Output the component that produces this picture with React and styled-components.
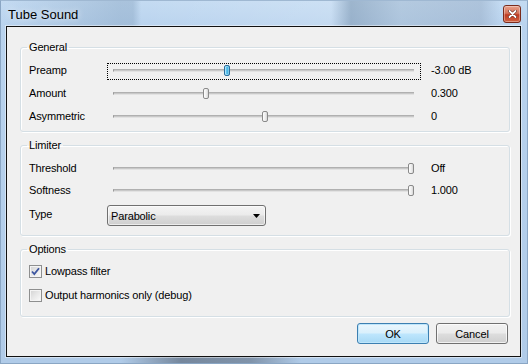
import React from "react";
import styled, { createGlobalStyle, css } from "styled-components";

const GlobalStyle = createGlobalStyle`
  html, body {
    margin: 0;
    padding: 0;
  }
  body {
    width: 528px;
    height: 364px;
    overflow: hidden;
    font-family: "Liberation Sans", Arial, sans-serif;
    font-size: 11px;
    letter-spacing: -0.15px;
    color: #000;
  }
`;

const Window = styled.div`
  width: 528px;
  height: 364px;
  display: flex;
  flex-direction: column;
  box-sizing: border-box;
  border: 1px solid #8aa6c4;
  border-top-color: #9fb8d2;
  background:
    linear-gradient(90deg, rgba(90, 100, 115, 0) 0px, rgba(90, 100, 115, 0) 120px,
      rgba(70, 80, 95, 0.55) 180px, rgba(70, 80, 95, 0.45) 250px, rgba(90, 100, 115, 0) 300px) bottom / 100% 8px no-repeat,
    linear-gradient(180deg, #c4dbf2 0px, #b9d3ee 26px, #b0cbe8 100%);
`;

const TitleBar = styled.div`
  height: 25px;
  display: flex;
  align-items: flex-start;
  justify-content: space-between;
  padding: 0 6px 0 7px;
  background:
    linear-gradient(90deg, rgba(255, 255, 255, 0) 0px, rgba(120, 150, 180, 0.35) 118px,
      rgba(120, 150, 180, 0.35) 132px, rgba(255, 255, 255, 0) 140px, rgba(255, 255, 255, 0.15) 330px,
      rgba(110, 135, 160, 0.45) 350px, rgba(150, 170, 190, 0.35) 400px, rgba(140, 160, 185, 0.4) 480px,
      rgba(255, 255, 255, 0) 500px);
`;

const Title = styled.span`
  font-size: 13px;
  line-height: 16px;
  letter-spacing: 0;
  margin-top: 6px;
  color: #000;
  text-shadow: 0 0 6px rgba(255, 255, 255, 0.9);
`;

const CloseButton = styled.div`
  width: 18px;
  height: 18px;
  margin-top: 4px;
  box-sizing: border-box;
  border: 1px solid #7a2b1c;
  border-radius: 3px;
  display: flex;
  align-items: center;
  justify-content: center;
  background: linear-gradient(180deg, #e8a08a 0%, #d5735a 45%, #bf3b22 55%, #d0603f 100%);
  box-shadow: inset 0 0 0 1px rgba(255, 255, 255, 0.35);
`;

const Frame = styled.div`
  flex: 1;
  display: flex;
  padding: 0 6px 6px 5px;
`;

const Client = styled.div`
  flex: 1;
  display: flex;
  flex-direction: column;
  border: 1px solid #111;
  box-shadow: 0 0 0 1px rgba(255, 255, 255, 0.45);
  background: #f0f0f0;
  padding: 13px 10px 0 13px;
`;

const Group = styled.fieldset`
  margin: ${(p) => (p.$first ? "0" : "6px")} 0 0 0;
  padding: ${(p) => p.$pad};
  border: 1px solid #d5dfe5;
  border-radius: 3px;
  box-shadow: inset 1px 1px 0 #fff, 1px 1px 0 #fff;
  display: flex;
  flex-direction: column;
  min-width: 0;
`;

const Legend = styled.legend`
  margin-left: -2px;
  padding: 0 2px;
  line-height: 14px;
  font-size: 11px;
`;

const Row = styled.div`
  height: ${(p) => p.$h}px;
  display: flex;
  align-items: center;
`;

const Label = styled.span`
  width: 78px;
  flex: none;
`;

const SliderBox = styled.div`
  position: relative;
  width: 314px;
  height: 17px;
  margin-top: 3px;
  box-sizing: border-box;
  flex: none;
  border: 1px dotted ${(p) => (p.$focused ? "#000" : "transparent")};
`;

const Track = styled.div`
  position: absolute;
  left: 5px;
  right: 6px;
  top: 5px;
  height: 1px;
  border-top: 1px solid #b0b0b0;
  border-bottom: 1px solid #e2e2e2;
  border-left: 1px solid #9a9a9a;
  background: #c8c8c8;
`;

const Thumb = styled.div`
  position: absolute;
  top: 1px;
  width: 6px;
  height: 11px;
  box-sizing: border-box;
  border-radius: 2px;
  ${(p) =>
    p.$focused
      ? css`
          border: 1px solid #2c6f9f;
          background: linear-gradient(90deg, #8ddcfb 0%, #4fbbe9 50%, #2fa3d6 100%);
          box-shadow: inset 0 0 0 1px rgba(255, 255, 255, 0.35);
        `
      : css`
          border: 1px solid #8a8a8a;
          background: linear-gradient(90deg, #ffffff 0%, #ececec 60%, #d6d6d6 100%);
        `}
`;

const Value = styled.span`
  margin-left: 10px;
`;

const Combo = styled.div`
  width: 159px;
  height: 21px;
  margin-top: 4px;
  box-sizing: border-box;
  border: 1px solid #707070;
  border-radius: 3px;
  display: flex;
  align-items: center;
  justify-content: space-between;
  padding: 0 5px 0 3px;
  background: linear-gradient(180deg, #f4f4f4 0%, #ebebeb 48%, #dddddd 52%, #cfcfcf 100%);
  box-shadow: inset 0 0 0 1px rgba(255, 255, 255, 0.6);
`;

const CheckRow = styled.label`
  height: 24px;
  display: flex;
  align-items: center;
  gap: 3px;
`;

const CheckBox = styled.span`
  width: 13px;
  height: 13px;
  box-sizing: border-box;
  border: 1px solid #8e8f8f;
  background: linear-gradient(135deg, #d2d2d2 0%, #e8e8e8 50%, #fbfbfb 100%);
  box-shadow: inset 0 0 0 1px #f4f4f4;
  display: flex;
  align-items: center;
  justify-content: center;
`;

const ButtonBar = styled.div`
  display: flex;
  justify-content: flex-end;
  gap: 7px;
  margin-top: 6px;
  padding-right: 2px;
`;

const Button = styled.button`
  width: 72px;
  height: 21px;
  padding: 0;
  font-family: inherit;
  font-size: 11px;
  letter-spacing: inherit;
  color: #000;
  border-radius: 3px;
  ${(p) =>
    p.$default
      ? css`
          border: 1px solid #3c7fb1;
          background: linear-gradient(180deg, #eaf6fd 0%, #d9f0fc 48%, #bee6fd 52%, #a7d9f5 100%);
          box-shadow: inset 0 0 0 1px #bfe6fb;
        `
      : css`
          border: 1px solid #707070;
          background: linear-gradient(180deg, #f2f2f2 0%, #ebebeb 48%, #dddddd 52%, #cfcfcf 100%);
          box-shadow: inset 0 0 0 1px rgba(255, 255, 255, 0.7);
        `}
`;

const Slider = ({ label, value, pos, focused, h = 23 }) => (
  <Row $h={h}>
    <Label>{label}</Label>
    <SliderBox $focused={focused}>
      <Track />
      <Thumb $focused={focused} style={{ left: `${3 + pos * 298}px` }} />
    </SliderBox>
    <Value>{value}</Value>
  </Row>
);

export default function App() {
  return (
    <>
      <GlobalStyle />
      <Window>
        <TitleBar>
          <Title>Tube Sound</Title>
          <CloseButton>
            <svg width="9" height="8" viewBox="0 0 9 8">
              <path d="M1.5 1 L7.5 7 M7.5 1 L1.5 7" stroke="#5a1a10" strokeWidth="3" strokeLinecap="round" />
              <path d="M1.5 1 L7.5 7 M7.5 1 L1.5 7" stroke="#fff" strokeWidth="1.8" strokeLinecap="round" />
            </svg>
          </CloseButton>
        </TitleBar>
        <Frame>
          <Client>
            <Group $first $pad="4px 8px 4px">
              <Legend>General</Legend>
              <Slider label="Preamp" value="-3.00 dB" pos={0.38} focused />
              <Slider label="Amount" value="0.300" pos={0.308} />
              <Slider label="Asymmetric" value="0" pos={0.506} />
            </Group>
            <Group $pad="5px 8px 9px">
              <Legend>Limiter</Legend>
              <Slider label="Threshold" value="Off" pos={0.997} h={22} />
              <Slider label="Softness" value="1.000" pos={0.997} h={22} />
              <Row $h={25}>
                <Label>Type</Label>
                <Combo>
                  <span>Parabolic</span>
                  <svg width="7" height="4" viewBox="0 0 7 4">
                    <path d="M0 0 H7 L3.5 4 Z" fill="#000" />
                  </svg>
                </Combo>
              </Row>
            </Group>
            <Group $pad="3px 8px 9px">
              <Legend>Options</Legend>
              <CheckRow>
                <CheckBox>
                  <svg width="9" height="9" viewBox="0 0 9 9">
                    <path d="M1 4.5 L3.3 7 L8 1.2" fill="none" stroke="#3d56a0" strokeWidth="1.8" />
                  </svg>
                </CheckBox>
                <span>Lowpass filter</span>
              </CheckRow>
              <CheckRow>
                <CheckBox />
                <span>Output harmonics only (debug)</span>
              </CheckRow>
            </Group>
            <ButtonBar>
              <Button $default>OK</Button>
              <Button>Cancel</Button>
            </ButtonBar>
          </Client>
        </Frame>
      </Window>
    </>
  );
}
